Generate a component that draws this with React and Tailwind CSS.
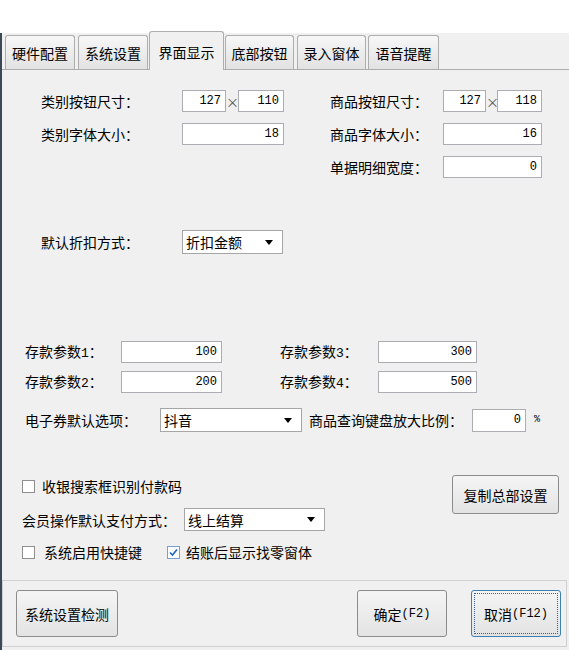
import { useState } from 'react';

const tabs = [
	{ name: '硬件配置', cls: 'ml-[3px] w-[70px]' },
	{ name: '系统设置', cls: 'ml-[3px] w-[70px]' },
	{ name: '界面显示', cls: 'ml-[1px] w-[75px]', active: true },
	{ name: '底部按钮', cls: 'ml-[1px] w-[69px]' },
	{ name: '录入窗体', cls: 'ml-[3px] w-[69px]' },
	{ name: '语音提醒', cls: 'ml-[2px] w-[71px]' },
];

function NumBox({ value, className }) {
	return (
		<div
			className={`h-full bg-white border border-[#abadb3] flex items-center justify-end pr-[4px] font-['Liberation_Mono',monospace] text-[12px] ${className}`}>
			{value}
		</div>
	);
}

function Select({ value, className }) {
	return (
		<div
			className={`h-full bg-white border border-[#a6a6a6] flex items-center justify-between pl-[3px] pr-[9px] ${className}`}>
			<span>{value}</span>
			<span className="w-0 h-0 border-l-[4px] border-r-[4px] border-t-[5px] border-l-transparent border-r-transparent border-t-black" />
		</div>
	);
}

function CheckBox({ checked }) {
	return (
		<div
			className={`w-[13px] h-[13px] bg-white border flex items-center justify-center ${checked ? 'border-[#7a9fd6]' : 'border-[#8f8f8f]'}`}>
			{checked && (
				<svg width="9" height="9" viewBox="0 0 9 9">
					<path d="M1 4.5 L3.5 7 L8 1.5" fill="none" stroke="#1f62c9" strokeWidth="1.6" />
				</svg>
			)}
		</div>
	);
}

function Button({ children, className, focused }) {
	return (
		<div
			className={`relative flex items-center justify-center rounded-[3px] border bg-gradient-to-b from-[#f5f5f5] to-[#e3e3e3] ${focused ? 'border-[#3c7fb1]' : 'border-[#8c8c8c]'} ${className}`}>
			{focused && (
				<div className="absolute inset-[2px] border border-dotted border-[#3a5f86]" />
			)}
			{children}
		</div>
	);
}

export default function App() {
	const [active] = useState('界面显示');

	return (
		<div className="w-[569px] h-[650px] bg-white flex flex-col text-[14px] leading-none text-black font-['Noto_Sans_CJK_SC',sans-serif]">
			<div className="h-[33px] bg-white" />
			<div className="flex-1 flex flex-col bg-[#f0f0f0] border-l-2 border-[#3a4858]">
				{/* tab strip */}
				<div className="h-[36px] flex items-end">
					{tabs.map((tab) =>
						tab.name === active ? (
							<div
								key={tab.name}
								className={`relative z-10 h-[39px] -mb-[1px] flex items-center justify-center pt-[2px] bg-[#f0f0f0] border border-b-0 border-[#adadad] rounded-t-[3px] ${tab.cls}`}>
								{tab.name}
							</div>
						) : (
							<div
								key={tab.name}
								className={`h-[34px] flex items-center justify-center bg-gradient-to-b from-[#f7f7f7] to-[#e2e2e2] border border-b-0 border-[#adadad] rounded-t-[3px] ${tab.cls}`}>
								{tab.name}
							</div>
						)
					)}
				</div>

				{/* panel */}
				<div className="h-[511px] border-t border-[#adadad] flex flex-col">
					<div className="mt-[20px] h-[22px] flex items-center pl-[39px]">
						<span className="w-[141px]">类别按钮尺寸：</span>
						<NumBox value="127" className="w-[44px]" />
						<span className="w-[12px] text-center text-[13px] text-[#555]">×</span>
						<NumBox value="110" className="w-[46px]" />
						<span className="ml-[46px] w-[113px]">商品按钮尺寸：</span>
						<NumBox value="127" className="w-[43px]" />
						<span className="w-[11px] text-center text-[13px] text-[#555]">×</span>
						<NumBox value="118" className="w-[45px]" />
					</div>
					<div className="mt-[11px] h-[22px] flex items-center pl-[39px]">
						<span className="w-[141px]">类别字体大小：</span>
						<NumBox value="18" className="w-[102px]" />
						<span className="ml-[46px] w-[113px]">商品字体大小：</span>
						<NumBox value="16" className="w-[99px]" />
					</div>
					<div className="mt-[11px] h-[22px] flex items-center pl-[39px]">
						<span className="ml-[289px] w-[113px]">单据明细宽度：</span>
						<NumBox value="0" className="w-[99px]" />
					</div>

					<div className="mt-[52px] h-[24px] flex items-center pl-[39px]">
						<span className="w-[141px]">默认折扣方式：</span>
						<Select value="折扣金额" className="w-[101px]" />
					</div>

					<div className="mt-[87px] h-[22px] flex items-center pl-[23px]">
						<span className="w-[96px]">
							存款参数<span className="font-['Liberation_Mono',monospace] text-[13px]">1</span>：
						</span>
						<NumBox value="100" className="w-[101px]" />
						<span className="ml-[58px] w-[98px]">
							存款参数<span className="font-['Liberation_Mono',monospace] text-[13px]">3</span>：
						</span>
						<NumBox value="300" className="w-[99px]" />
					</div>
					<div className="mt-[8px] h-[22px] flex items-center pl-[23px]">
						<span className="w-[96px]">
							存款参数<span className="font-['Liberation_Mono',monospace] text-[13px]">2</span>：
						</span>
						<NumBox value="200" className="w-[101px]" />
						<span className="ml-[58px] w-[98px]">
							存款参数<span className="font-['Liberation_Mono',monospace] text-[13px]">4</span>：
						</span>
						<NumBox value="500" className="w-[99px]" />
					</div>

					<div className="mt-[15px] h-[24px] flex items-center pl-[23px]">
						<span className="w-[135px]">电子券默认选项：</span>
						<Select value="抖音" className="w-[142px]" />
						<span className="ml-[7px] w-[163px]">商品查询键盘放大比例：</span>
						<div className="h-[23px]">
							<NumBox value="0" className="w-[54px]" />
						</div>
						<span className="ml-[8px] text-[10px] font-['Liberation_Mono',monospace]">%</span>
					</div>

					<div className="mt-[42px] flex justify-between pr-[10px]">
						<div className="flex flex-col">
							<div className="mt-[2px] h-[20px] flex items-center pl-[20px]">
								<CheckBox />
								<span className="ml-[7px]">收银搜索框识别付款码</span>
							</div>
							<div className="mt-[12px] h-[23px] flex items-center pl-[20px]">
								<span className="w-[162px]">会员操作默认支付方式：</span>
								<Select value="线上结算" className="w-[141px]" />
							</div>
							<div className="mt-[11px] h-[20px] flex items-center pl-[20px]">
								<CheckBox />
								<span className="ml-[9px] w-[123px]">系统启用快捷键</span>
								<CheckBox checked />
								<span className="ml-[6px]">结账后显示找零窗体</span>
							</div>
						</div>
						<Button className="mt-[1px] w-[107px] h-[39px]">复制总部设置</Button>
					</div>
				</div>

				{/* bottom group */}
				<div className="h-[67px] mr-[2px] border border-[#d0d0d0] flex items-start pt-[9px]">
					<Button className="ml-[13px] w-[102px] h-[47px]">系统设置检测</Button>
					<Button className="ml-auto w-[90px] h-[47px]">
						确定<span className="font-['Liberation_Mono',monospace] text-[12px]">(F2)</span>
					</Button>
					<Button focused className="ml-[24px] mr-[5px] w-[90px] h-[47px]">
						取消<span className="font-['Liberation_Mono',monospace] text-[12px]">(F12)</span>
					</Button>
				</div>
			</div>
		</div>
	);
}
